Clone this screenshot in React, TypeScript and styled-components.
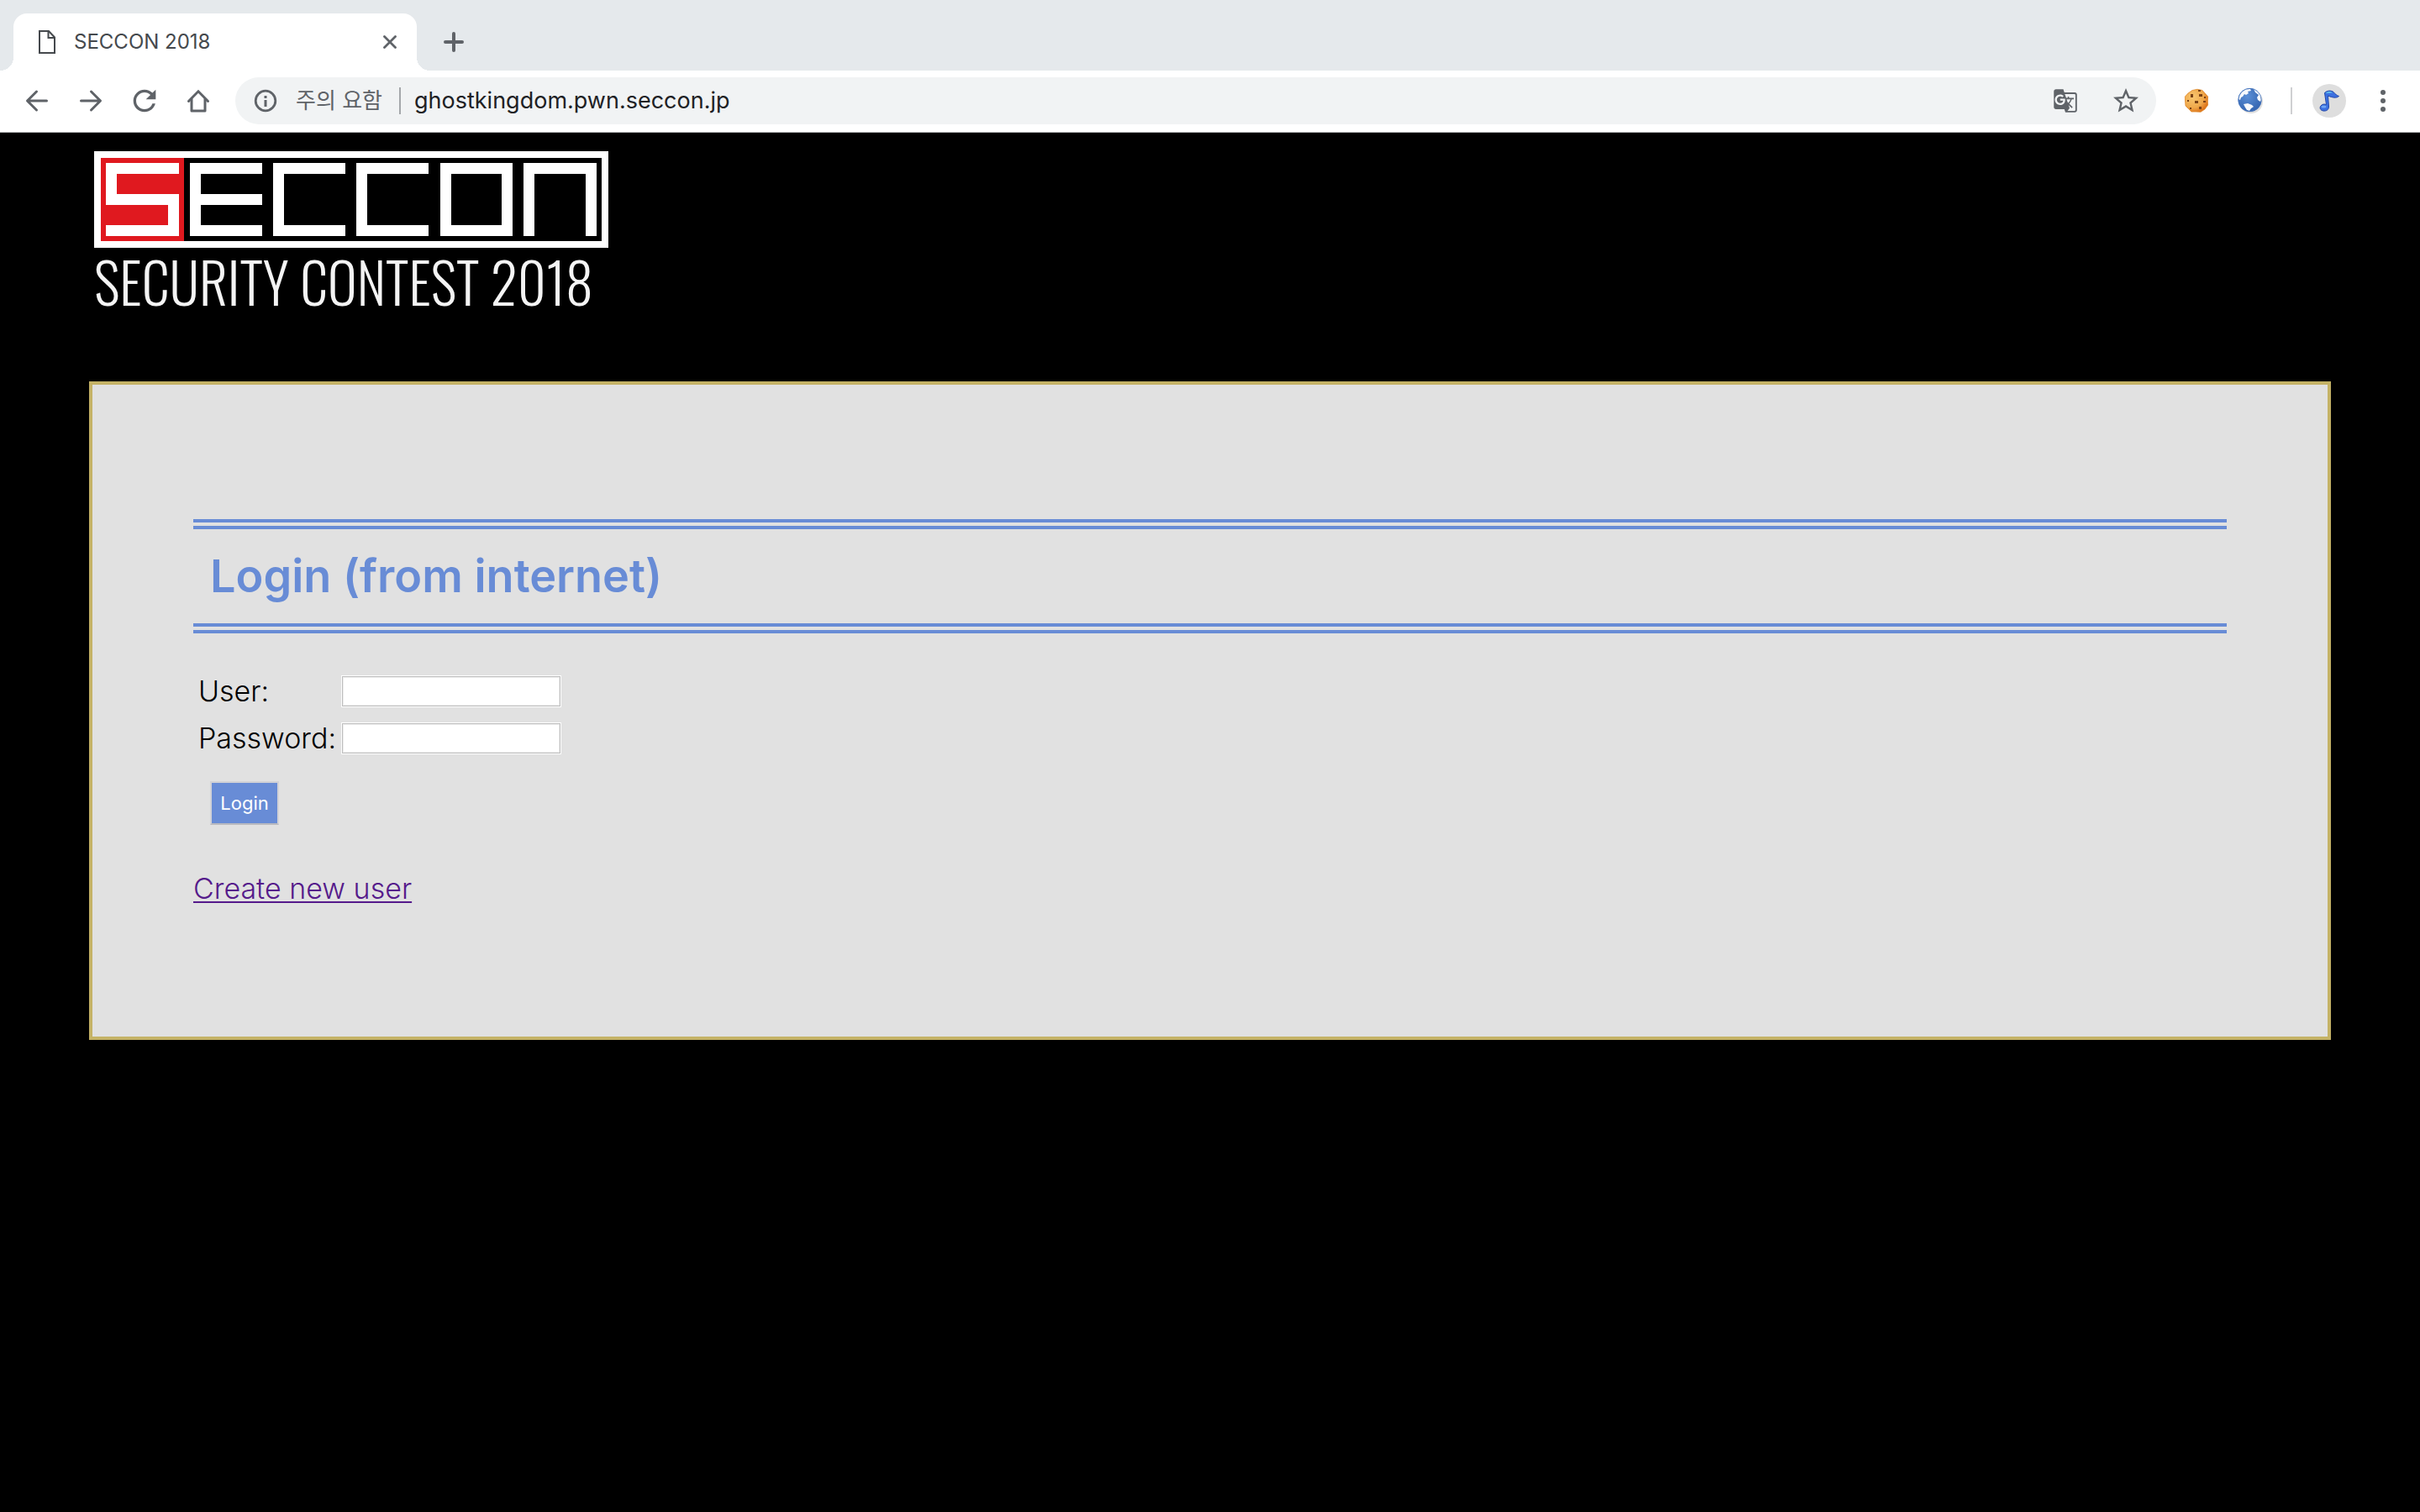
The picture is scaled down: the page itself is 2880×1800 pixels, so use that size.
import React from 'react';
import styled, { createGlobalStyle } from 'styled-components';
import { MdGTranslate, MdRefresh, MdStarBorder } from 'react-icons/md';

const uiFont = 'Inter, "Noto Sans CJK KR", sans-serif';
const grey = '#5f6368';
const blue = '#688cd6';

const GlobalStyle = createGlobalStyle`
  *, *::before, *::after { box-sizing: border-box; }
  body { margin: 0; background: #000; font-family: ${uiFont}; }
  button { padding: 0; border: 0; background: none; color: inherit; font: inherit; cursor: pointer; }
  svg { display: block; flex: none; }
`;

const Window = styled.div`
  display: flex;
  flex-direction: column;
  min-height: 100vh;
  background: #000;
`;

const TabStrip = styled.div`
  display: flex;
  align-items: center;
  padding: 16px 16px 0;
  background: #e5e9ec;
  color: ${grey};
`;

const Tab = styled.div`
  position: relative;
  display: flex;
  align-items: center;
  gap: 22px;
  width: 480px;
  height: 68px;
  padding: 0 16px 0 30px;
  border-radius: 16px 16px 0 0;
  background: #fff;
  color: #45494d;

  &::before, &::after {
    content: '';
    position: absolute;
    bottom: 0;
    width: 16px;
    height: 16px;
  }
  &::before {
    right: 100%;
    background: radial-gradient(circle at 0 0, transparent 16px, #fff 16px);
  }
  &::after {
    left: 100%;
    background: radial-gradient(circle at 100% 0, transparent 16px, #fff 16px);
  }
`;

const TabTitle = styled.span`
  flex: 1;
  font-size: 24px;
  line-height: 32px;
`;

const IconButton = styled.button<{ $size?: number }>`
  display: flex;
  flex: none;
  align-items: center;
  justify-content: center;
  width: ${p => p.$size ?? 40}px;
  height: ${p => p.$size ?? 40}px;
`;

const NewTabButton = styled(IconButton)`
  margin-left: 24px;
`;

const Toolbar = styled.div`
  display: flex;
  align-items: center;
  gap: 24px;
  padding: 8px 24px 9px;
  border-bottom: 1px solid #b4b5b7;
  background: #fff;
  color: ${grey};
`;

const Omnibox = styled.div`
  display: flex;
  flex: 1;
  align-items: center;
  height: 56px;
  margin-right: 4px;
  padding: 0 18px 0 22px;
  border-radius: 28px;
  background: #f1f3f4;
`;

const SecurityButton = styled.button`
  display: flex;
  align-items: center;
  gap: 22px;
  font-size: 26px;
  line-height: 32px;
  white-space: nowrap;
`;

const Divider = styled.span<{ $color: string }>`
  flex: none;
  width: 2px;
  height: 32px;
  background: ${p => p.$color};
`;

const AddressDivider = styled(Divider)`
  margin: 0 16px 0 20px;
`;

const ExtensionDivider = styled(Divider)`
  margin-left: 4px;
`;

const AddressInput = styled.input`
  flex: 1;
  min-width: 0;
  padding: 0;
  border: 0;
  outline: 0;
  background: none;
  color: #202124;
  font-family: ${uiFont};
  font-size: 27px;
  line-height: 32px;
`;

const OmniboxActions = styled.div`
  display: flex;
  gap: 36px;
`;

const AvatarButton = styled(IconButton)`
  border-radius: 50%;
  background: #dedede;
`;

const SiteHeader = styled.header`
  height: 296px;
  padding: 22px 112px 0;
`;

const Tagline = styled.p`
  margin: 0;
  color: #f4f4f4;
  font-family: Oswald, "Roboto Condensed", sans-serif;
  font-size: 66px;
  font-weight: 300;
  line-height: 78px;
  white-space: nowrap;
`;

const Panel = styled.main`
  margin: 0 106px;
  padding: 160px 120px 150px;
  border: 4px solid #c4b266;
  background: #e1e1e1;
  color: #000;
  font-size: 34px;
  font-weight: 300;
  line-height: 52px;
`;

const Heading = styled.h1`
  margin: 0 0 38px;
  padding: 24px 20px;
  border: double ${blue};
  border-width: 12px 0;
  color: ${blue};
  font-size: 54px;
  font-weight: 600;
  line-height: 64px;
`;

const FieldTable = styled.table`
  border-collapse: separate;
  border-spacing: 4px 6px;
`;

const LabelCell = styled.th`
  height: 50px;
  padding: 0 2px;
  font-weight: 300;
  line-height: 50px;
  text-align: left;
`;

const FieldCell = styled.td`
  padding: 0;
  vertical-align: middle;
`;

const TextField = styled.input`
  display: block;
  width: 262px;
  height: 38px;
  padding: 2px 4px;
  border: 1px solid #fff;
  border-radius: 0;
  outline: 0;
  background: #fff;
  box-shadow: inset 0 0 0 1px #bdbdbd, inset 0 0 0 2px #ededed;
  font-family: ${uiFont};
  font-size: 22px;
`;

const SubmitButton = styled.button`
  && {
    display: block;
    min-width: 82px;
    height: 52px;
    margin: 20px 0 0 20px;
    padding: 0 10px;
    border: 2px solid;
    border-color: #d2d2d6 #d2d2d6 #b9b9bf;
    background: ${blue};
    color: #fff;
    font-size: 22px;
    font-weight: 400;
    line-height: 48px;
  }
`;

const CreateUser = styled.p`
  margin: 50px 0 0;
`;

const VisitedLink = styled.a`
  color: #551a8b;
  text-decoration: underline;
  text-decoration-thickness: 2px;
  text-underline-offset: 3px;
  text-decoration-skip-ink: none;
`;

const PageIcon = () => (
  <svg width="20" height="28" viewBox="0 0 20 28" fill="none" stroke="#45494d" strokeWidth="2">
    <path d="M1 1H12L19 8.5V27H1Z" />
    <path d="M11.5 1V9H19" />
  </svg>
);

const CloseIcon = () => (
  <svg width="16" height="16" viewBox="0 0 16 16" stroke={grey} strokeWidth="2.8" strokeLinecap="round">
    <path d="M1.5 1.5L14.5 14.5M14.5 1.5L1.5 14.5" />
  </svg>
);

const PlusIcon = () => (
  <svg width="24" height="24" viewBox="0 0 24 24" stroke={grey} strokeWidth="4" strokeLinecap="round">
    <path d="M12 2V22M2 12H22" />
  </svg>
);

const ArrowIcon = ({ forward }: { forward?: boolean }) => (
  <svg width="28" height="28" viewBox="0 0 28 28" fill="none" stroke={grey} strokeWidth="3" strokeLinecap="round" strokeLinejoin="round">
    {forward
      ? <path d="M2.5 14H25M14.5 3L25.5 14L14.5 25" />
      : <path d="M25.5 14H3M13.5 3L2.5 14L13.5 25" />}
  </svg>
);

const HomeIcon = () => (
  <svg width="28" height="28" viewBox="0 0 28 28" fill="none" stroke={grey} strokeWidth="3" strokeLinecap="round">
    <path d="M2.5 14.5L14 2.8L25.5 14.5" />
    <path d="M6 12V26H22V12" strokeLinejoin="round" />
  </svg>
);

const InfoIcon = () => (
  <svg width="28" height="28" viewBox="0 0 28 28" fill={grey}>
    <circle cx="14" cy="14" r="11.8" fill="none" stroke={grey} strokeWidth="2.8" />
    <rect x="12.5" y="8" width="3" height="3" />
    <rect x="12.5" y="13" width="3" height="8" />
  </svg>
);

const CookieIcon = () => (
  <svg width="30" height="30" viewBox="0 0 30 30">
    <defs>
      <radialGradient id="cookie" cx="0.35" cy="0.35" r="0.75">
        <stop offset="0" stopColor="#f8c670" />
        <stop offset="0.6" stopColor="#efa94c" />
        <stop offset="1" stopColor="#d9680f" />
      </radialGradient>
    </defs>
    <path d="M10 2.5L16 1.3L22 2.5L26 7L28.6 10L28.3 16L28.6 20L25 25L20 28.3L14 28L9 28L5 24L2 21L1.5 15L1.4 10L5 6Z" fill="url(#cookie)" stroke="#e08a2c" strokeWidth="0.8" strokeLinejoin="round" />
    <g fill="#7a4216">
      <rect x="17" y="2" width="3" height="2" />
      <rect x="8" y="7" width="3" height="4" />
      <rect x="18" y="7" width="4" height="3" />
      <rect x="13" y="15" width="4" height="3" />
      <rect x="4" y="14" width="2" height="2" />
      <rect x="23" y="15" width="3" height="2" />
      <rect x="18" y="22" width="3" height="3" />
      <rect x="7" y="23" width="2" height="2" />
      <rect x="24" y="10" width="2" height="2" />
    </g>
  </svg>
);

const GlobeIcon = () => (
  <svg width="32" height="32" viewBox="0 0 32 32">
    <defs>
      <radialGradient id="globe" cx="0.4" cy="0.35" r="0.7">
        <stop offset="0" stopColor="#5b8fd6" />
        <stop offset="1" stopColor="#3262ae" />
      </radialGradient>
      <clipPath id="globeEdge"><circle cx="15.5" cy="15" r="14" /></clipPath>
    </defs>
    <circle cx="17" cy="17" r="14" fill="#dedede" />
    <circle cx="15.5" cy="15" r="14" fill="url(#globe)" />
    <g fill="#f7f9fc" clipPath="url(#globeEdge)">
      <path d="M3 10L6 5L11 2L16 2L17 4L13 5L14 7L11 9L9 8L7 11L5 12L4 15L2 14Z" />
      <path d="M20 2L25 4L29 8L30 14L28 17L25 15L24 12L26 9L22 6Z" />
      <path d="M8 20L13 19L18 21L20 23L17 25L15 28L12 27L10 24Z" />
    </g>
    <circle cx="15.5" cy="15" r="13.6" fill="none" stroke="#4674ba" strokeWidth="0.8" />
  </svg>
);

const NoteIcon = () => (
  <svg width="26" height="28" viewBox="0 0 26 28" stroke="#2347a8" strokeWidth="1" strokeLinejoin="round">
    <path d="M7.5 4.5C11 1.5 15 1.5 18 3.5C20 6 22 7.5 24.5 8.5C22 11 17 10.5 11.5 8L12.5 21C12.5 25 9 26.5 6 26C2.5 25.5 1 22.5 3 20C4.5 18 7 17.5 9.5 18.5Z" fill="#3b6fe0" />
    <path d="M8.5 4.5C12 2.5 15 2.5 17 4.5C13 4.5 11 5.5 8.5 4.5Z" fill="#62c4ee" stroke="none" />
    <ellipse cx="6.5" cy="21" rx="3" ry="1.6" fill="#6fa4f2" stroke="none" />
  </svg>
);

const MenuIcon = () => (
  <svg width="6" height="28" viewBox="0 0 6 28" fill={grey}>
    <circle cx="3" cy="4" r="3" />
    <circle cx="3" cy="14" r="3" />
    <circle cx="3" cy="24" r="3" />
  </svg>
);

const Emblem = () => (
  <svg width="612" height="115" viewBox="0 0 612 115" role="img" aria-label="SECCON" fill="none">
    <rect x="4" y="4" width="604" height="107" stroke="#fff" strokeWidth="8" />
    <rect x="8" y="8" width="99" height="99" fill="#e0191f" />
    <g stroke="#fff" strokeWidth="13">
      <polyline points="101,20.5 20.5,20.5 20.5,57.5 94.5,57.5 94.5,94.5 14,94.5" />
      <polyline points="200,20.5 120.5,20.5 120.5,94.5 200,94.5" />
      <line x1="120" y1="57.5" x2="200" y2="57.5" />
      <polyline points="299,20.5 219.5,20.5 219.5,94.5 299,94.5" />
      <polyline points="398,20.5 318.5,20.5 318.5,94.5 398,94.5" />
      <rect x="418.5" y="20.5" width="73" height="74" />
      <polyline points="517.5,101 517.5,20.5 591.5,20.5 591.5,101" />
    </g>
  </svg>
);

export default function App() {
  return (
    <Window>
      <GlobalStyle />
      <TabStrip>
        <Tab>
          <PageIcon />
          <TabTitle>SECCON 2018</TabTitle>
          <IconButton $size={32} aria-label="Close tab"><CloseIcon /></IconButton>
        </Tab>
        <NewTabButton aria-label="New tab"><PlusIcon /></NewTabButton>
      </TabStrip>

      <Toolbar>
        <IconButton aria-label="Back"><ArrowIcon /></IconButton>
        <IconButton aria-label="Forward"><ArrowIcon forward /></IconButton>
        <IconButton aria-label="Reload"><MdRefresh size={40} /></IconButton>
        <IconButton aria-label="Home"><HomeIcon /></IconButton>
        <Omnibox>
          <SecurityButton><InfoIcon />주의 요함</SecurityButton>
          <AddressDivider $color="#a4a7aa" />
          <AddressInput aria-label="Address" defaultValue="ghostkingdom.pwn.seccon.jp" spellCheck={false} />
          <OmniboxActions>
            <IconButton $size={36} aria-label="Translate this page"><MdGTranslate size={30} /></IconButton>
            <IconButton $size={36} aria-label="Bookmark this page"><MdStarBorder size={36} /></IconButton>
          </OmniboxActions>
        </Omnibox>
        <IconButton aria-label="Cookie extension"><CookieIcon /></IconButton>
        <IconButton aria-label="Globe extension"><GlobeIcon /></IconButton>
        <ExtensionDivider $color="#cfd0d2" />
        <AvatarButton aria-label="Profile"><NoteIcon /></AvatarButton>
        <IconButton aria-label="Menu"><MenuIcon /></IconButton>
      </Toolbar>

      <SiteHeader>
        <Emblem />
        <Tagline>SECURITY CONTEST 2018</Tagline>
      </SiteHeader>

      <Panel>
        <Heading>Login (from internet)</Heading>
        <form onSubmit={e => e.preventDefault()}>
          <FieldTable>
            <tbody>
              <tr>
                <LabelCell scope="row"><label htmlFor="user">User:</label></LabelCell>
                <FieldCell><TextField id="user" type="text" /></FieldCell>
              </tr>
              <tr>
                <LabelCell scope="row"><label htmlFor="password">Password:</label></LabelCell>
                <FieldCell><TextField id="password" type="password" /></FieldCell>
              </tr>
            </tbody>
          </FieldTable>
          <SubmitButton type="submit">Login</SubmitButton>
        </form>
        <CreateUser><VisitedLink href="#create">Create new user</VisitedLink></CreateUser>
      </Panel>
    </Window>
  );
}
